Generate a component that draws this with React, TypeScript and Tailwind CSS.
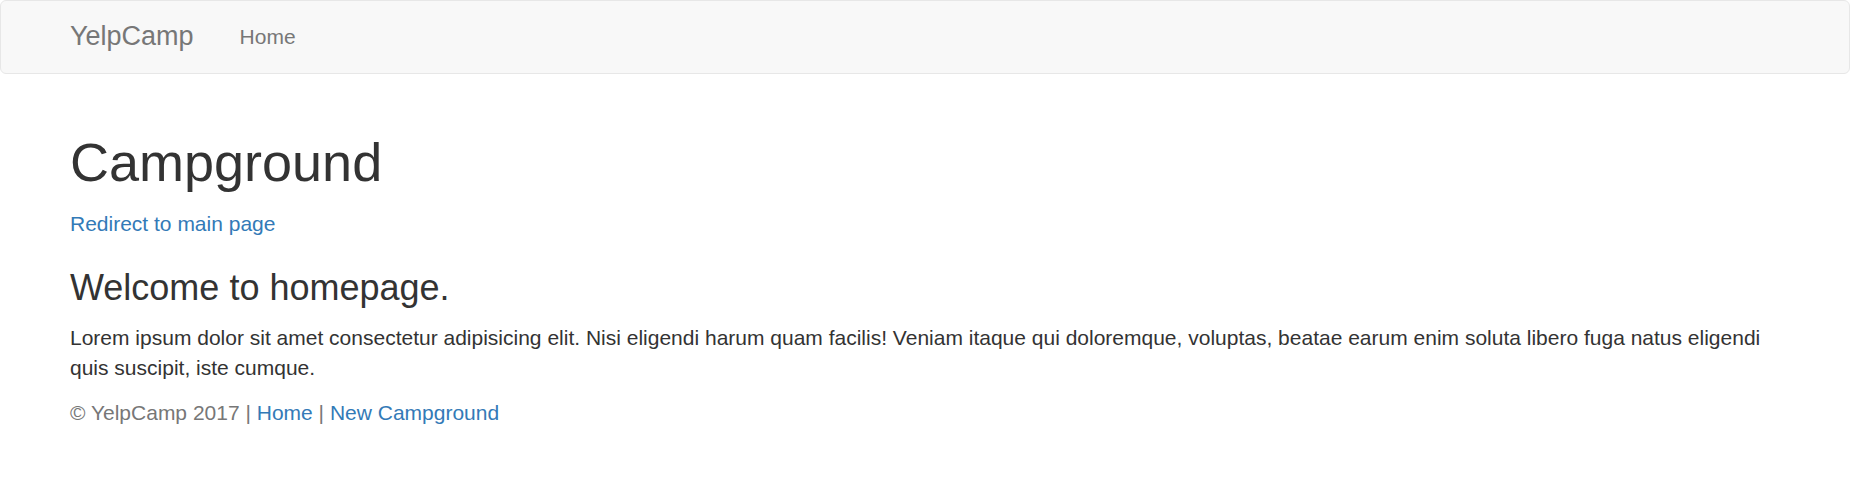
export default function App() {
  return (
    <div className="min-h-screen bg-white font-['Liberation_Sans',Arial,sans-serif] text-[21px] leading-[30px] text-[#333]">
      <nav className="h-[74px] bg-[#f8f8f8] border-[1.5px] border-[#e7e7e7] rounded-[6px]">
        <div className="mx-auto w-[1710px] flex items-center h-full">
          <a href="#" className="text-[27px] text-[#777] pb-[2px]">YelpCamp</a>
          <a href="#" className="ml-[46px] text-[21px] text-[#777]">Home</a>
        </div>
      </nav>
      <div className="mx-auto w-[1710px] pt-[58px]">
        <h1 className="text-[54px] leading-[60px] text-[#333]">Campground</h1>
        <a href="#" className="block mt-[17px] text-[#337ab7]">Redirect to main page</a>
        <h3 className="mt-[29px] text-[36px] leading-[40px] text-[#333]">Welcome to homepage.</h3>
        <p className="mt-[15px]">
          Lorem ipsum dolor sit amet consectetur adipisicing elit. Nisi eligendi harum quam facilis! Veniam itaque qui doloremque, voluptas, beatae earum enim soluta libero fuga natus eligendi quis suscipit, iste cumque.
        </p>
        <p className="mt-[15px] text-[#777]">
          © YelpCamp 2017 | <a href="#" className="text-[#337ab7]">Home</a> | <a href="#" className="text-[#337ab7]">New Campground</a>
        </p>
      </div>
    </div>
  );
}
